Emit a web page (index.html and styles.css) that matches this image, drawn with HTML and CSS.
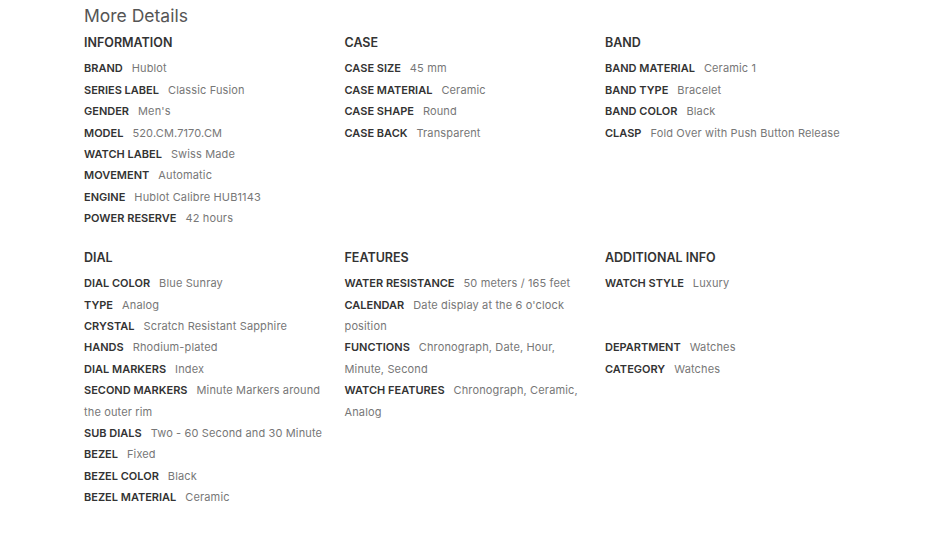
FILE: index.html
```html
<!DOCTYPE html>
<html lang="en">
<head>
<meta charset="utf-8">
<title>More Details</title>
<link rel="stylesheet" href="styles.css">
</head>
<body>
<div class="details">
  <h2 class="title">More Details</h2>
  <div class="grid">
    <section class="group">
      <h3 class="heading">INFORMATION</h3>
      <div class="row"><span class="label">BRAND</span><span class="value">Hublot</span></div>
      <div class="row"><span class="label">SERIES LABEL</span><span class="value">Classic Fusion</span></div>
      <div class="row"><span class="label">GENDER</span><span class="value">Men's</span></div>
      <div class="row"><span class="label">MODEL</span><span class="value">520.CM.7170.CM</span></div>
      <div class="row"><span class="label">WATCH LABEL</span><span class="value">Swiss Made</span></div>
      <div class="row"><span class="label">MOVEMENT</span><span class="value">Automatic</span></div>
      <div class="row"><span class="label">ENGINE</span><span class="value">Hublot Calibre HUB1143</span></div>
      <div class="row"><span class="label">POWER RESERVE</span><span class="value">42 hours</span></div>
    </section>
    <section class="group">
      <h3 class="heading">CASE</h3>
      <div class="row"><span class="label">CASE SIZE</span><span class="value">45 mm</span></div>
      <div class="row"><span class="label">CASE MATERIAL</span><span class="value">Ceramic</span></div>
      <div class="row"><span class="label">CASE SHAPE</span><span class="value">Round</span></div>
      <div class="row"><span class="label">CASE BACK</span><span class="value">Transparent</span></div>
    </section>
    <section class="group">
      <h3 class="heading">BAND</h3>
      <div class="row"><span class="label">BAND MATERIAL</span><span class="value">Ceramic 1</span></div>
      <div class="row"><span class="label">BAND TYPE</span><span class="value">Bracelet</span></div>
      <div class="row"><span class="label">BAND COLOR</span><span class="value">Black</span></div>
      <div class="row"><span class="label">CLASP</span><span class="value">Fold Over with Push Button Release</span></div>
    </section>
    <section class="group second">
      <h3 class="heading">DIAL</h3>
      <div class="row"><span class="label">DIAL COLOR</span><span class="value">Blue Sunray</span></div>
      <div class="row"><span class="label">TYPE</span><span class="value">Analog</span></div>
      <div class="row"><span class="label">CRYSTAL</span><span class="value">Scratch Resistant Sapphire</span></div>
      <div class="row"><span class="label">HANDS</span><span class="value">Rhodium-plated</span></div>
      <div class="row"><span class="label">DIAL MARKERS</span><span class="value">Index</span></div>
      <div class="row"><span class="label">SECOND MARKERS</span><span class="value">Minute Markers around the outer rim</span></div>
      <div class="row"><span class="label">SUB DIALS</span><span class="value">Two - 60 Second and 30 Minute</span></div>
      <div class="row"><span class="label">BEZEL</span><span class="value">Fixed</span></div>
      <div class="row"><span class="label">BEZEL COLOR</span><span class="value">Black</span></div>
      <div class="row"><span class="label">BEZEL MATERIAL</span><span class="value">Ceramic</span></div>
    </section>
    <section class="group second">
      <h3 class="heading">FEATURES</h3>
      <div class="row"><span class="label">WATER RESISTANCE</span><span class="value">50 meters / 165 feet</span></div>
      <div class="row"><span class="label">CALENDAR</span><span class="value">Date display at the 6 o'clock position</span></div>
      <div class="row"><span class="label">FUNCTIONS</span><span class="value">Chronograph, Date, Hour, Minute, Second</span></div>
      <div class="row"><span class="label">WATCH FEATURES</span><span class="value">Chronograph, Ceramic, Analog</span></div>
    </section>
    <section class="group second">
      <h3 class="heading">ADDITIONAL INFO</h3>
      <div class="row"><span class="label">WATCH STYLE</span><span class="value">Luxury</span></div>
      <div class="row empty"></div>
      <div class="row"><span class="label">DEPARTMENT</span><span class="value">Watches</span></div>
      <div class="row"><span class="label">CATEGORY</span><span class="value">Watches</span></div>
    </section>
  </div>
</div>
</body>
</html>
```
FILE: styles.css
```css
* { box-sizing: border-box; }
html, body { margin: 0; padding: 0; background: #fff; }
body {
  font-family: Inter, "Noto Sans", "Liberation Sans", sans-serif;
  color: #333;
}
.details {
  padding: 4px 0 0 84px;
}
.title {
  margin: 0;
  font-size: 17.5px;
  font-weight: 400;
  line-height: 24px;
  color: #555;
}
.grid {
  display: grid;
  grid-template-columns: repeat(3, 245px);
  column-gap: 15.5px;
  row-gap: 17.3px;
  margin-top: 4px;
}
.heading {
  margin: 0 0 5.3px;
  padding-top: 1px;
  font-size: 12.5px;
  font-weight: 600;
  line-height: 20px;
  color: #333;
}
.row {
  font-size: 11px;
  line-height: 21.4px;
}
.row.empty { height: 42.8px; }
.label {
  font-weight: 600;
  color: #333;
  margin-right: 9px;
}
.value {
  color: #777;
  letter-spacing: 0.14px;
}
```
